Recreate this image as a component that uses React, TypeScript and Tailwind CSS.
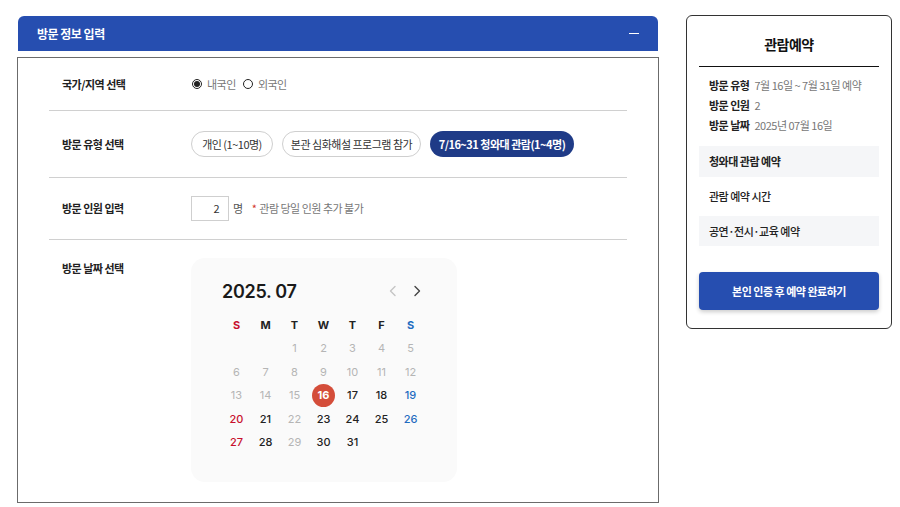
import React from "react";

const font = { fontFamily: '"Noto Sans CJK KR", "Noto Sans", sans-serif' };

type Day = { d: number; tone: "off" | "sun" | "sat" | "norm" | "sel" };

const buildDays = (): (Day | null)[] => {
  const cells: (Day | null)[] = [null, null];
  for (let d = 1; d <= 31; d++) {
    const col = (d + 1) % 7;
    let tone: Day["tone"] = "norm";
    if (d < 16 || d === 22 || d === 29) tone = "off";
    else if (d === 16) tone = "sel";
    else if (col === 0) tone = "sun";
    else if (col === 6) tone = "sat";
    cells.push({ d, tone });
  }
  return cells;
};

const toneClass: Record<Day["tone"], string> = {
  off: "text-[#b5b5b5] font-normal",
  sun: "text-[#c8102e] font-medium",
  sat: "text-[#1f6cc0] font-medium",
  norm: "text-[#222] font-medium",
  sel: "text-white font-bold",
};

const Calendar = () => {
  const days = buildDays();
  const heads = [
    { t: "S", c: "text-[#c8102e]" },
    { t: "M", c: "text-[#222]" },
    { t: "T", c: "text-[#222]" },
    { t: "W", c: "text-[#222]" },
    { t: "T", c: "text-[#222]" },
    { t: "F", c: "text-[#222]" },
    { t: "S", c: "text-[#1f6cc0]" },
  ];
  return (
    <div
      className="w-[266px] h-[224px] rounded-[14px] bg-[#fafafa] pl-[31px] pt-[21px] tracking-normal"
      style={{ fontFamily: "Inter, sans-serif" }}
    >
      <div className="w-[204px] flex items-center justify-between h-[24px]">
        <span className="text-[18px] font-semibold text-[#1a1a1a] tracking-[-0.3px]">2025. 07</span>
        <div className="flex items-center gap-[10px] pr-[2px]">
          <svg width="14" height="14" viewBox="0 0 14 14" fill="none">
            <path d="M9 2.5 4.5 7 9 11.5" stroke="#c4c4c4" strokeWidth="1.4" strokeLinecap="round" strokeLinejoin="round" />
          </svg>
          <svg width="14" height="14" viewBox="0 0 14 14" fill="none">
            <path d="M5 2.5 9.5 7 5 11.5" stroke="#444" strokeWidth="1.4" strokeLinecap="round" strokeLinejoin="round" />
          </svg>
        </div>
      </div>
      <div className="mt-[10px] grid grid-cols-[repeat(7,29px)] auto-rows-[23.5px] text-[11px]">
        {heads.map((h, i) => (
          <div key={i} className={`flex items-center justify-center font-bold ${h.c}`}>
            {h.t}
          </div>
        ))}
        {days.map((c, i) =>
          c ? (
            <div key={i} className="flex items-center justify-center">
              {c.tone === "sel" ? (
                <span className="w-[23px] h-[23px] rounded-full bg-[#d44d3a] flex items-center justify-center text-white font-bold">
                  {c.d}
                </span>
              ) : (
                <span className={toneClass[c.tone]}>{c.d}</span>
              )}
            </div>
          ) : (
            <div key={i} />
          )
        )}
      </div>
    </div>
  );
};

const Row = ({ label, children, className }: { label: string; children: React.ReactNode; className?: string }) => (
  <div className={`flex border-b border-[#d0d0d0] ${className ?? ""}`}>
    <div className="w-[142px] pl-[13px] text-[11px] font-semibold text-[#222] shrink-0">{label}</div>
    <div className="flex-1">{children}</div>
  </div>
);

const App = () => {
  return (
    <div className="w-[900px] h-[507px] bg-white flex pt-[15px] pl-[17px] gap-[27px] tracking-[-0.5px]" style={font}>
      {/* left column */}
      <div className="w-[642px]">
        <div className="ml-px mt-px w-[640px] h-[35px] rounded-t-[6px] bg-[#264eb0] flex items-center justify-between pl-[19px] pr-[19px]">
          <span className="text-white text-[12px] font-bold">방문 정보 입력</span>
          <span className="w-[10px] h-[1.5px] bg-white" />
        </div>
        <div className="mt-[6px] h-[446px] border border-[#6b6b6b] px-[31px]">
          <Row label="국가/지역 선택" className="h-[53px] items-center">
            <div className="flex items-center text-[11px] text-[#777]">
              <span className="w-[10px] h-[10px] rounded-full border border-[#222] flex items-center justify-center ml-[1px]">
                <span className="w-[6px] h-[6px] rounded-full bg-[#222]" />
              </span>
              <span className="ml-[5px]">내국인</span>
              <span className="ml-[7px] w-[10px] h-[10px] rounded-full border border-[#222]" />
              <span className="ml-[5px]">외국인</span>
            </div>
          </Row>
          <Row label="방문 유형 선택" className="h-[67px] items-center">
            <div className="flex items-center gap-[9px] text-[11px]">
              <span className="h-[26px] w-[82px] rounded-full border border-[#cfcfcf] flex items-center justify-center text-[#333]">
                개인 (1~10명)
              </span>
              <span className="h-[26px] w-[139px] rounded-full border border-[#cfcfcf] flex items-center justify-center text-[#333]">
                본관 심화해설 프로그램 참가
              </span>
              <span className="h-[26px] w-[144px] rounded-full bg-[#1f3b87] flex items-center justify-center text-white font-bold">
                7/16~31 청와대 관람(1~4명)
              </span>
            </div>
          </Row>
          <Row label="방문 인원 입력" className="h-[62px] items-center">
            <div className="flex items-center text-[11px]">
              <span className="w-[38px] h-[25px] border border-[#cfcfcf] flex items-center justify-end pr-[9px] text-[#333]">2</span>
              <span className="ml-[4px] text-[#555]">명</span>
              <span className="ml-[9px] text-[#d2322d]">*</span>
              <span className="ml-[3px] text-[#777]">관람 당일 인원 추가 불가</span>
            </div>
          </Row>
          <div className="flex pt-[18px]">
            <div className="w-[142px] pl-[13px] pt-[2px] text-[11px] font-semibold text-[#222] shrink-0">방문 날짜 선택</div>
            <Calendar />
          </div>
        </div>
      </div>

      {/* right panel */}
      <div className="w-[206px] h-[314px] border border-[#333] rounded-[6px] px-[12px] pt-[19px]">
        <div className="text-center text-[14px] font-bold text-[#111] h-[18px] leading-[18px]">관람예약</div>
        <div className="mt-[13px] h-px bg-[#111]" />
        <div className="pl-[10px] pt-[8px] text-[11px] leading-[20px]">
          <div className="flex gap-[5px]">
            <span className="font-semibold text-[#222]">방문 유형</span>
            <span className="text-[#777]">7월 16일 ~ 7월 31일 예약</span>
          </div>
          <div className="flex gap-[5px]">
            <span className="font-semibold text-[#222]">방문 인원</span>
            <span className="text-[#777]">2</span>
          </div>
          <div className="flex gap-[5px]">
            <span className="font-semibold text-[#222]">방문 날짜</span>
            <span className="text-[#777]">2025년 07월 16일</span>
          </div>
        </div>
        <div className="mt-[11px] h-[31px] bg-[#f5f6f8] pl-[10px] flex items-center text-[11px] font-semibold text-[#222]">청와대 관람 예약</div>
        <div className="mt-[4px] h-[30px] pl-[10px] flex items-center text-[11px] font-medium text-[#222]">관람 예약 시간</div>
        <div className="mt-[5px] h-[30px] bg-[#f5f6f8] pl-[10px] flex items-center text-[11px] font-medium text-[#222]">공연·전시·교육 예약</div>
        <div className="mt-[26px] h-[38px] rounded-[4px] bg-[#264eb0] shadow-[0_2px_4px_rgba(0,0,0,0.2)] flex items-center justify-center text-white text-[11px] font-bold">
          본인 인증 후 예약 완료하기
        </div>
      </div>
    </div>
  );
};

export default App;
